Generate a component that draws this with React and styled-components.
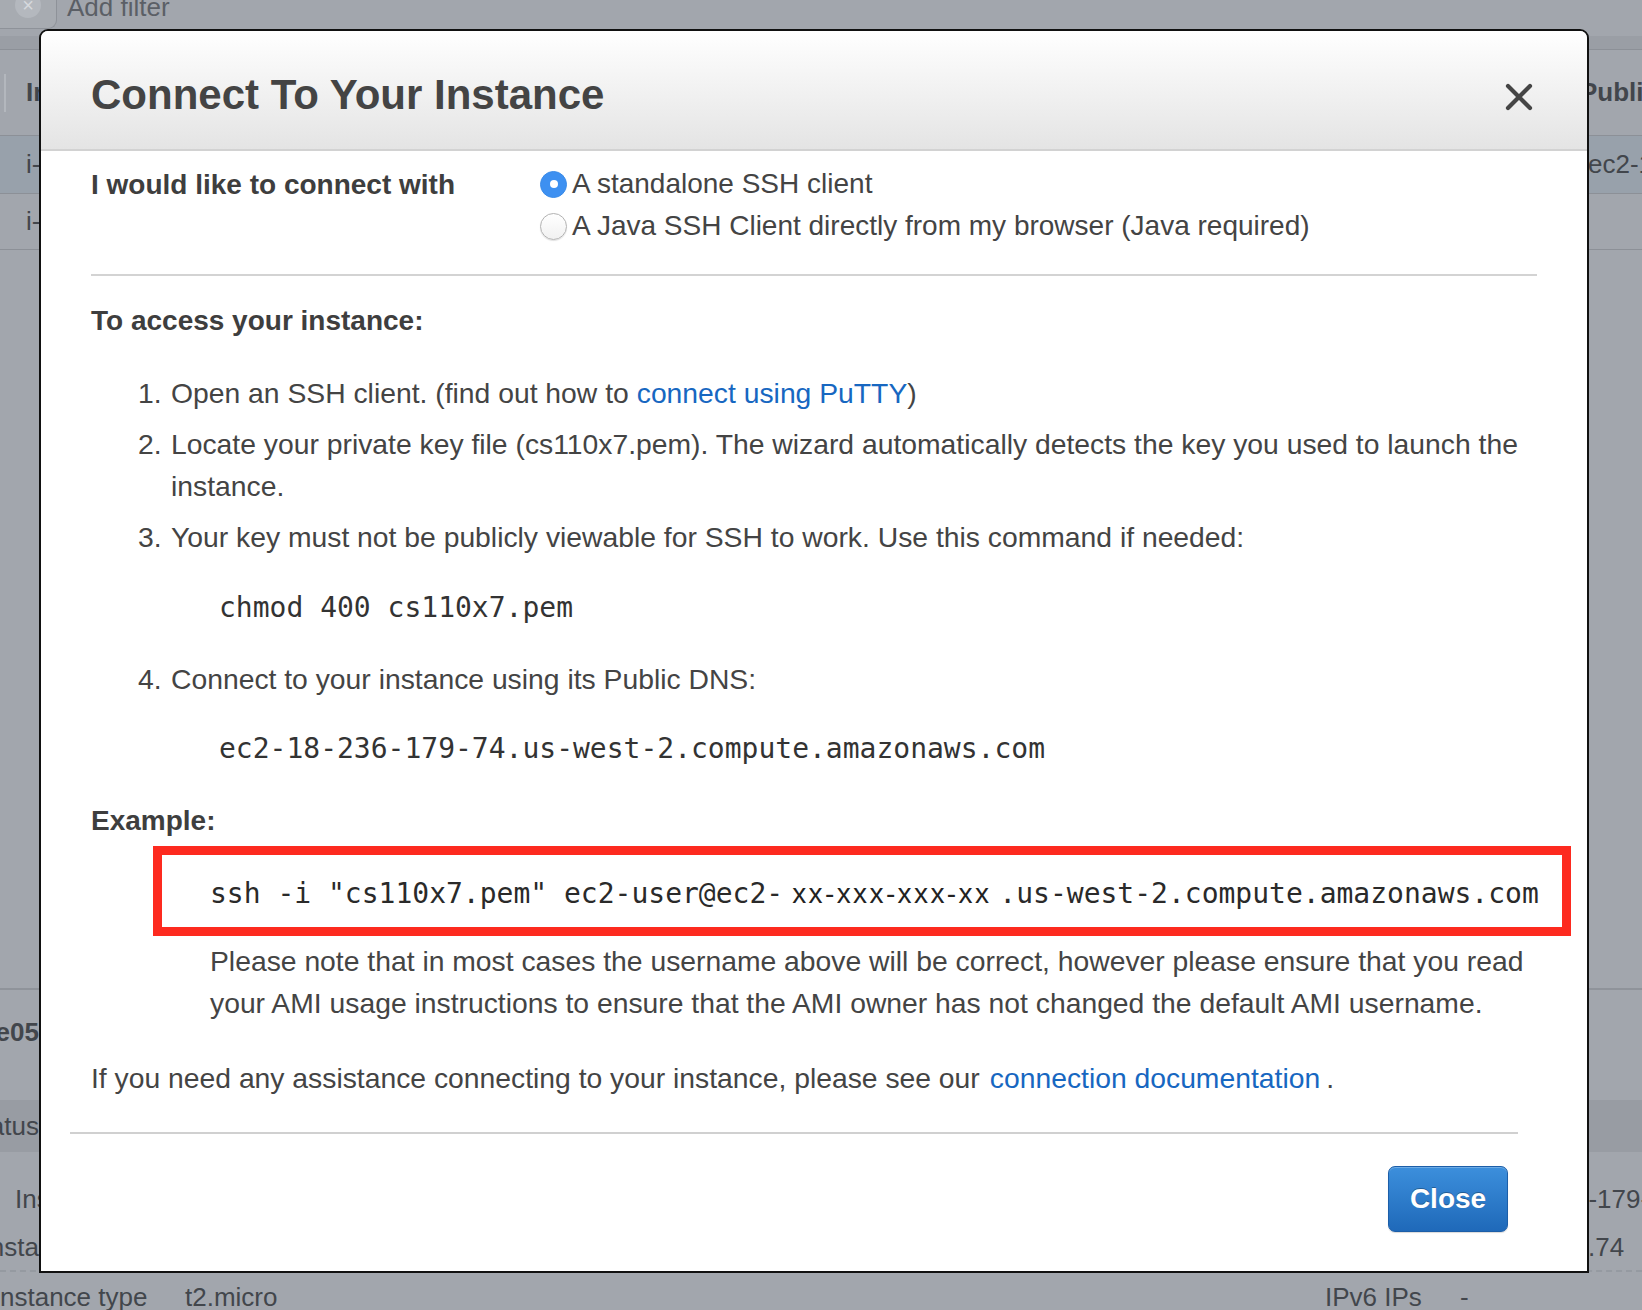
import React from 'react';
import styled, { createGlobalStyle } from 'styled-components';

const GlobalStyle = createGlobalStyle`
  html, body {
    margin: 0;
    padding: 0;
  }
  body {
    width: 1642px;
    height: 1310px;
    overflow: hidden;
    font-family: "Liberation Sans", Arial, sans-serif;
  }
`;

const Page = styled.div`
  position: relative;
  width: 1642px;
  height: 1310px;
  overflow: hidden;
  background: #a2a6ad;
  color: #42464c;
  font-family: "Liberation Sans", Arial, sans-serif;
  font-size: 26px;
`;

/* ---------- console behind the dialog ---------- */

const FilterBar = styled.div`
  display: flex;
  align-items: flex-start;
  height: 30px;
`;

const FilterInput = styled.div`
  width: 56px;
  height: 28px;
  border-right: 1px solid #8e9299;
  border-bottom: 1px solid #8e9299;
  border-radius: 0 0 9px 0;
  background: #a7abb1;
  display: flex;
  justify-content: center;
`;

const ClearDot = styled.span`
  width: 26px;
  height: 26px;
  margin-top: -8px;
  border-radius: 50%;
  background: #b4b8be;
  color: #d6d9dd;
  font-size: 20px;
  line-height: 26px;
  text-align: center;
`;

const FilterText = styled.span`
  margin-left: 10px;
  line-height: 14px;
  color: #5b5f66;
`;

const Band = styled.div`
  height: 20px;
  border-top: 6px solid #a2a6ad;
  box-sizing: border-box;
  background: #9a9ea5;
  border-bottom: 1px solid #8c9097;
`;

const BgRow = styled.div`
  display: flex;
  justify-content: space-between;
  align-items: center;
  height: ${({ $h }) => $h}px;
  box-sizing: border-box;
  background: ${({ $bg }) => $bg || 'transparent'};
  border-bottom: ${({ $line }) => ($line ? '1px solid #8c9097' : '0')};
  font-weight: ${({ $bold }) => ($bold ? 700 : 400)};
`;

const LeftCell = styled.div`
  width: ${({ $end }) => ($end ? '39px' : '200px')};
  padding-left: ${({ $pad }) => $pad || 0}px;
  overflow: hidden;
  white-space: nowrap;
  display: flex;
  align-items: center;
  justify-content: ${({ $end }) => ($end ? 'flex-end' : 'flex-start')};
`;

const RightCell = styled.div`
  width: 60px;
  overflow: hidden;
  white-space: nowrap;
  text-indent: ${({ $indent }) => $indent || 0}px;
`;

const ColSep = styled.span`
  width: 2px;
  height: 38px;
  margin-right: 20px;
  background: #b3b7bd;
`;

const Spacer = styled.div`
  height: ${({ $h }) => $h}px;
  border-bottom: ${({ $line }) => ($line ? '2px solid #8f939a' : '0')};
  box-sizing: border-box;
`;

const BottomRow = styled.div`
  display: grid;
  grid-template-columns: 185px 1140px 135px 1fr;
  align-items: center;
  height: 52px;
  border-top: 2px dashed #959aa1;
  box-sizing: border-box;
`;

/* ---------- dialog ---------- */

const Modal = styled.div`
  position: absolute;
  left: 39px;
  top: 29px;
  width: 1550px;
  height: 1244px;
  box-sizing: border-box;
  border: 2px solid #111;
  border-radius: 9px 9px 0 0;
  background: #fff;
  color: #444;
  display: flex;
  flex-direction: column;
  font-size: 28.3px;
`;

const Header = styled.div`
  height: 120px;
  flex-shrink: 0;
  box-sizing: border-box;
  display: flex;
  align-items: center;
  justify-content: space-between;
  padding: 9px 54px 0 50px;
  border-radius: 7px 7px 0 0;
  background: linear-gradient(#ffffff, #e4e4e4);
  border-bottom: 2px solid #d2d2d2;
`;

const Title = styled.h1`
  margin: 0;
  font-size: 42px;
  font-weight: 700;
  color: #444;
`;

const CloseX = styled.button`
  border: 0;
  padding: 0;
  margin-top: 4px;
  background: none;
  width: 28px;
  height: 28px;
  display: flex;
  cursor: pointer;
`;

const Body = styled.div`
  padding: 0 50px;
  line-height: 42px;
`;

const ConnectRow = styled.div`
  display: grid;
  grid-template-columns: 449px 1fr;
  padding-top: 13px;
  font-size: 28px;
`;

const Label = styled.div`
  font-weight: 700;
  color: #3e3e3e;
`;

const RadioList = styled.div`
  display: flex;
  flex-direction: column;
  margin-top: -1px;
  gap: 0;
`;

const RadioLine = styled.label`
  display: flex;
  align-items: center;
  gap: 5px;
  color: #444;
`;

const Radio = styled.span`
  width: 27px;
  height: 27px;
  box-sizing: border-box;
  border-radius: 50%;
  flex-shrink: 0;
  display: flex;
  align-items: center;
  justify-content: center;
  background: ${({ $on }) => ($on ? '#3d90f1' : 'linear-gradient(#ffffff, #f1f1f1)')};
  border: 1px solid ${({ $on }) => ($on ? '#3a8be8' : '#b2b2b2')};
  box-shadow: ${({ $on }) => ($on ? 'none' : '0 1px 1px rgba(0,0,0,0.12)')};

  &::after {
    content: '';
    width: 8px;
    height: 8px;
    border-radius: 50%;
    background: #fff;
    display: ${({ $on }) => ($on ? 'block' : 'none')};
  }
`;

const Rule = styled.div`
  height: 2px;
  margin-top: 27px;
  background: #d3d3d3;
`;

const Heading = styled.div`
  font-size: 28px;
  font-weight: 700;
  color: #3e3e3e;
  margin-top: ${({ $mt }) => $mt}px;
`;

const Steps = styled.ol`
  list-style: none;
  margin: 30px 0 0;
  padding: 0 0 0 47px;
`;

const Step = styled.li`
  display: grid;
  grid-template-columns: 33px 1fr;
  margin-top: ${({ $first }) => ($first ? 0 : 9)}px;
`;

const Link = styled.a`
  color: #1767c1;
  text-decoration: none;
  margin-left: ${({ $gap }) => $gap || 0}px;
  margin-right: ${({ $after }) => $after || 0}px;
`;

const Code = styled.div`
  font-family: "DejaVu Sans Mono", "Liberation Mono", monospace;
  font-size: 28px;
  color: #333;
  margin: ${({ $mt }) => $mt}px 0 ${({ $mb }) => $mb}px 48px;
  white-space: nowrap;
`;

const Highlight = styled.div`
  margin: 4px -34px 0 62px;
  height: 90px;
  box-sizing: border-box;
  border: 9px solid #fd2a1f;
  padding: 5px 0 0 48px;
  display: flex;
  align-items: center;
  white-space: nowrap;
  line-height: 66px;
`;

const Mono = styled.span`
  font-family: "DejaVu Sans Mono", "Liberation Mono", monospace;
  font-size: 28px;
  color: #2a2a2a;
`;

const Sans = styled.span`
  color: #222;
  font-size: 28px;
  letter-spacing: 2.4px;
  margin: 0 8px 0 9px;
`;

const Note = styled.p`
  margin: 4px 0 0 119px;
`;

const Help = styled.p`
  margin: 33px 0 0;
`;

const Footer = styled.div`
  margin: 33px 69px 0 29px;
  padding: 32px 10px 0 0;
  border-top: 2px solid #d0d0d0;
  display: flex;
  justify-content: flex-end;
`;

const CloseButton = styled.button`
  width: 120px;
  height: 66px;
  border: 1px solid #1c5ea8;
  border-radius: 7px;
  background: linear-gradient(#3c8fdc, #1f69b9);
  box-shadow: inset 0 1px 0 rgba(255, 255, 255, 0.25), 0 1px 1px rgba(0, 0, 0, 0.15);
  color: #fff;
  font-family: "Liberation Sans", Arial, sans-serif;
  font-size: 28px;
  font-weight: 700;
  text-shadow: 0 -1px 0 rgba(0, 0, 0, 0.3);
  cursor: pointer;
`;

function XIcon() {
  return (
    <svg width="28" height="28" viewBox="0 0 28 28">
      <path d="M3 3 L25 25 M25 3 L3 25" stroke="#454545" strokeWidth="4.2" strokeLinecap="round" />
    </svg>
  );
}

function Console() {
  return (
    <>
      <FilterBar>
        <FilterInput>
          <ClearDot>×</ClearDot>
        </FilterInput>
        <FilterText>Add filter</FilterText>
      </FilterBar>
      <Band />
      <BgRow $h={86} $bold $line>
        <LeftCell $pad={4}><ColSep />Instance ID</LeftCell>
        <RightCell $indent={-2}>Public DNS</RightCell>
      </BgRow>
      <BgRow $h={58} $bg="#98a1ab" $line>
        <LeftCell $pad={26}>i-0e05</LeftCell>
        <RightCell $indent={6}>ec2-18</RightCell>
      </BgRow>
      <BgRow $h={56} $line>
        <LeftCell $pad={26}>i-0a1b</LeftCell>
        <RightCell />
      </BgRow>
      <Spacer $h={740} $line />
      <BgRow $h={84} $bold>
        <LeftCell $end>Instance: i-0e05</LeftCell>
        <RightCell />
      </BgRow>
      <Spacer $h={26} />
      <BgRow $h={52} $bg="#989ca3">
        <LeftCell $end>Status</LeftCell>
        <RightCell />
      </BgRow>
      <Spacer $h={22} />
      <BgRow $h={50}>
        <LeftCell $pad={15}>Instance ID</LeftCell>
        <RightCell $indent={-8}>6-179-74</RightCell>
      </BgRow>
      <BgRow $h={46}>
        <LeftCell $end>Insta</LeftCell>
        <RightCell $indent={6}>.74</RightCell>
      </BgRow>
      <BottomRow>
        <span>nstance type</span>
        <span>t2.micro</span>
        <span>IPv6 IPs</span>
        <span>-</span>
      </BottomRow>
    </>
  );
}

export default function App() {
  return (
    <Page>
      <GlobalStyle />
      <Console />
      <Modal>
        <Header>
          <Title>Connect To Your Instance</Title>
          <CloseX aria-label="Close">
            <XIcon />
          </CloseX>
        </Header>
        <Body>
          <ConnectRow>
            <Label>I would like to connect with</Label>
            <RadioList>
              <RadioLine>
                <Radio $on />
                A standalone SSH client
              </RadioLine>
              <RadioLine>
                <Radio />
                A Java SSH Client directly from my browser (Java required)
              </RadioLine>
            </RadioList>
          </ConnectRow>
          <Rule />
          <Heading $mt={24}>To access your instance:</Heading>
          <Steps>
            <Step $first>
              <span>1.</span>
              <span>
                Open an SSH client. (find out how to
                <Link href="#" $gap={8}>connect using PuTTY</Link>)
              </span>
            </Step>
            <Step>
              <span>2.</span>
              <span>
                Locate your private key file (cs110x7.pem). The wizard automatically detects the key you used to launch the instance.
              </span>
            </Step>
            <Step>
              <span>3.</span>
              <div>
                Your key must not be publicly viewable for SSH to work. Use this command if needed:
                <Code $mt={29} $mb={29}>chmod 400 cs110x7.pem</Code>
              </div>
            </Step>
            <Step $first>
              <span>4.</span>
              <div>
                Connect to your instance using its Public DNS:
                <Code $mt={28} $mb={0}>ec2-18-236-179-74.us-west-2.compute.amazonaws.com</Code>
              </div>
            </Step>
          </Steps>
          <Heading $mt={30}>Example:</Heading>
          <Highlight>
            <Mono>ssh -i "cs110x7.pem" ec2-user@ec2-</Mono>
            <Sans>xx-xxx-xxx-xx</Sans>
            <Mono>.us-west-2.compute.amazonaws.com</Mono>
          </Highlight>
          <Note>
            Please note that in most cases the username above will be correct, however please ensure that you read your AMI usage instructions to ensure that the AMI owner has not changed the default AMI username.
          </Note>
          <Help>
            If you need any assistance connecting to your instance, please see our
            <Link href="#" $gap={10} $after={6}>connection documentation</Link>.
          </Help>
        </Body>
        <Footer>
          <CloseButton>Close</CloseButton>
        </Footer>
      </Modal>
    </Page>
  );
}
